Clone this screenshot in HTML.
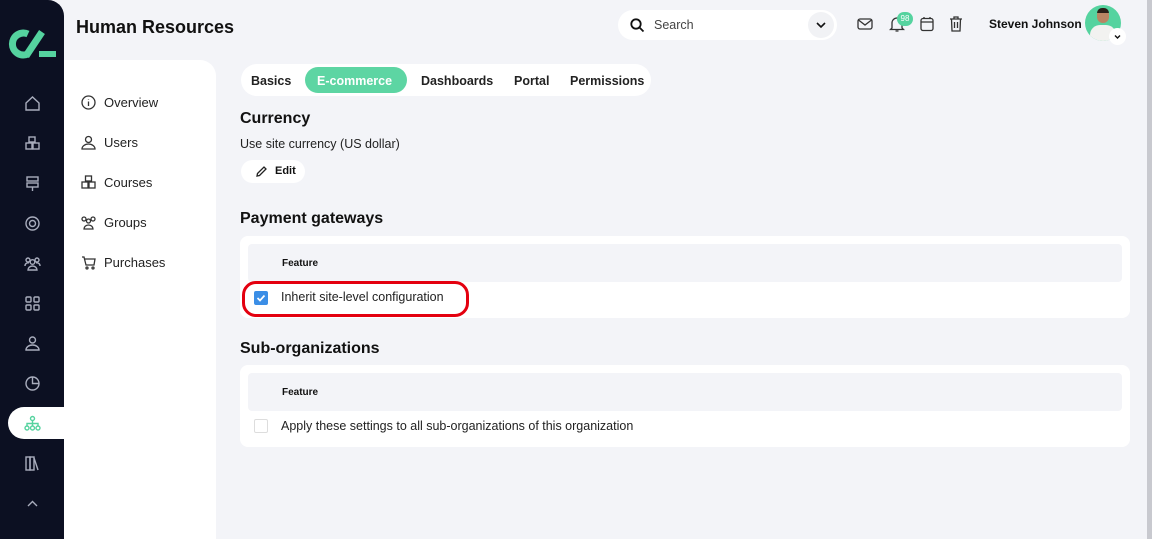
<!DOCTYPE html>
<html><head><meta charset="utf-8"><style>
*{box-sizing:border-box;margin:0;padding:0}
body{width:1152px;height:539px;overflow:hidden;background:#f3f4f8;font-family:"Liberation Sans",sans-serif;color:#111;position:relative}
.side{position:absolute;left:0;top:0;width:64px;height:539px;background:#0c1022;border-top-right-radius:16px}
.ic{position:absolute;left:24px;width:17px;height:17px}
.ic svg{width:17px;height:17px;fill:none;stroke:#a9adbd;stroke-width:1.4}
.act{position:absolute;left:8px;top:407px;width:60px;height:32px;background:#fff;border-radius:16px 0 0 16px}
.sub{position:absolute;left:64px;top:60px;width:152px;height:479px;background:#fff;border-top-right-radius:16px}
.si{position:absolute;left:17px;font-size:13px;color:#222;display:flex;align-items:center;gap:8px}
.si svg{width:15px;height:15px;fill:none;stroke:#333;stroke-width:1.3}
h1{position:absolute;left:76px;top:17px;font-size:18px;font-weight:bold;color:#111}
.search{position:absolute;left:618px;top:10px;width:219px;height:30px;background:#fff;border-radius:15px}
.tabs{position:absolute;left:241px;top:64px;width:410px;height:32px;background:#fff;border-radius:16px}
.tab{position:absolute;top:10px;font-size:12.5px;font-weight:bold;color:#222}
.h2{position:absolute;left:240px;font-size:16px;font-weight:bold}
.card{position:absolute;left:240px;width:890px;height:82px;background:#fff;border-radius:8px}
.hd{position:absolute;left:8px;top:8px;width:874px;height:38px;background:#f3f4f8;border-radius:4px;font-size:10px;font-weight:bold;padding:14px 0 0 34px}
.row{position:absolute;left:41px;font-size:12.5px;color:#222}
.cb{position:absolute;left:14px;width:14px;height:14px;border-radius:2px}
</style></head><body>
<div class="side">
<svg style="position:absolute;left:8px;top:28px" width="50" height="32" viewBox="0 0 50 32"><path d="M20 6 A11 11 0 1 0 20 26" fill="none" stroke="#55d39f" stroke-width="7"/><path d="M18 28 L34 4" stroke="#55d39f" stroke-width="7"/><rect x="31" y="23" width="17" height="6" fill="#55d39f"/></svg>
<div class="ic" style="top:95px"><svg viewBox="0 0 17 17"><path d="M2 8 L8.5 2 L15 8 V15 H2 Z"/></svg></div>
<div class="ic" style="top:135px"><svg viewBox="0 0 17 17"><rect x="5" y="2" width="6" height="5"/><rect x="2" y="8" width="6" height="6"/><rect x="9" y="8" width="6" height="6"/></svg></div>
<div class="ic" style="top:175px"><svg viewBox="0 0 17 17"><rect x="3" y="2" width="11" height="4"/><rect x="3" y="8" width="11" height="4"/><path d="M8.5 12V16"/></svg></div>
<div class="ic" style="top:215px"><svg viewBox="0 0 17 17"><circle cx="8.5" cy="8.5" r="6.5"/><circle cx="8.5" cy="8.5" r="3"/></svg></div>
<div class="ic" style="top:255px"><svg viewBox="0 0 17 17"><circle cx="4" cy="5" r="2"/><circle cx="13" cy="5" r="2"/><circle cx="8.5" cy="7" r="2.3"/><path d="M4 15 a4.5 4 0 0 1 9 0Z M1 11 a3 3 0 0 1 4 -3 M16 11 a3 3 0 0 0 -4 -3"/></svg></div>
<div class="ic" style="top:295px"><svg viewBox="0 0 17 17"><rect x="2" y="2" width="5" height="5" rx="1"/><rect x="10" y="2" width="5" height="5" rx="1"/><rect x="2" y="10" width="5" height="5" rx="1"/><rect x="10" y="10" width="5" height="5" rx="1"/></svg></div>
<div class="ic" style="top:335px"><svg viewBox="0 0 17 17"><circle cx="8.5" cy="5" r="3"/><path d="M2 15 a6.5 5 0 0 1 13 0Z"/></svg></div>
<div class="ic" style="top:375px"><svg viewBox="0 0 17 17"><circle cx="8.5" cy="8.5" r="6.5"/><path d="M8.5 2V8.5H15"/></svg></div>
<div class="act"></div>
<div class="ic" style="top:415px"><svg viewBox="0 0 17 17" style="stroke:#55d39f"><circle cx="8.5" cy="3.5" r="2"/><circle cx="3" cy="13" r="2"/><circle cx="8.5" cy="13" r="2"/><circle cx="14" cy="13" r="2"/><path d="M8.5 5.5V11 M3 11V8.5H14V11"/></svg></div>
<div class="ic" style="top:455px"><svg viewBox="0 0 17 17"><rect x="2" y="2" width="4" height="13"/><rect x="6" y="2" width="4" height="13"/><path d="M10 3 L14 15"/></svg></div>
<div class="ic" style="top:495px"><svg viewBox="0 0 17 17"><path d="M4 11 L8.5 6.5 L13 11"/></svg></div>
</div>
<div class="sub">
<div class="si" style="top:35px"><svg viewBox="0 0 15 15"><circle cx="7.5" cy="7.5" r="6.5"/><path d="M7.5 6.5V11 M7.5 4V4.5"/></svg>Overview</div>
<div class="si" style="top:75px"><svg viewBox="0 0 15 15"><circle cx="7.5" cy="4.5" r="3"/><path d="M1 14 a6.5 5 0 0 1 13 0Z"/></svg>Users</div>
<div class="si" style="top:115px"><svg viewBox="0 0 15 15"><rect x="4.5" y="1" width="6" height="5"/><rect x="1" y="7" width="6" height="6"/><rect x="8" y="7" width="6" height="6"/></svg>Courses</div>
<div class="si" style="top:155px"><svg viewBox="0 0 15 15"><circle cx="3" cy="4" r="2"/><circle cx="12" cy="4" r="2"/><circle cx="7.5" cy="6" r="2"/><path d="M3 14 a4.5 4 0 0 1 9 0Z"/></svg>Groups</div>
<div class="si" style="top:195px"><svg viewBox="0 0 15 15"><path d="M1 2H3L5 10H13L14 4H4"/><circle cx="6" cy="13" r="1"/><circle cx="12" cy="13" r="1"/></svg>Purchases</div>
</div>
<h1>Human Resources</h1>
<div class="search">
<svg style="position:absolute;left:12px;top:8px" width="15" height="15" viewBox="0 0 15 15"><circle cx="6" cy="6" r="4.7" fill="none" stroke="#111" stroke-width="1.8"/><path d="M9.5 9.5L13.5 13.5" stroke="#111" stroke-width="1.8"/></svg>
<span style="position:absolute;left:36px;top:8px;font-size:12.5px;color:#444">Search</span>
<div style="position:absolute;left:190px;top:2px;width:26px;height:26px;border-radius:13px;background:#f1f2f5"><svg width="26" height="26" viewBox="0 0 26 26"><path d="M9 11L13 15L17 11" fill="none" stroke="#111" stroke-width="1.6"/></svg></div>
</div>
<svg style="position:absolute;left:857px;top:17px" width="16" height="14" viewBox="0 0 16 14"><rect x="1" y="2" width="14" height="10" rx="2" fill="none" stroke="#333" stroke-width="1.3"/><path d="M1.5 3L8 8L14.5 3" fill="none" stroke="#333" stroke-width="1.3"/></svg>
<svg style="position:absolute;left:889px;top:16px" width="16" height="17" viewBox="0 0 16 17"><path d="M3 12V7a5 5 0 0 1 10 0v5l1.5 1.5h-13Z M6.5 15h3" fill="none" stroke="#333" stroke-width="1.3"/></svg>
<div style="position:absolute;left:897px;top:12px;width:16px;height:14px;border-radius:7px;background:#55d39f;color:#fff;font-size:8px;text-align:center;line-height:14px">98</div>
<svg style="position:absolute;left:920px;top:16px" width="14" height="16" viewBox="0 0 14 16"><rect x="1" y="2.5" width="12" height="12" rx="2" fill="none" stroke="#333" stroke-width="1.3"/><path d="M1 6H13 M4 1V3 M10 1V3" stroke="#333" stroke-width="1.3"/></svg>
<svg style="position:absolute;left:949px;top:16px" width="14" height="16" viewBox="0 0 14 16"><path d="M1 3H13 M5 3V1H9V3 M2.5 3L3 15H11L11.5 3 M5.5 6V12 M8.5 6V12" fill="none" stroke="#333" stroke-width="1.3"/></svg>
<div style="position:absolute;left:989px;top:17px;font-size:12px;font-weight:bold">Steven Johnson</div>
<div style="position:absolute;left:1085px;top:5px;width:36px;height:36px;border-radius:18px;background:#55d39f;overflow:hidden">
<div style="position:absolute;left:12px;top:4px;width:12px;height:14px;border-radius:6px;background:#b98563"></div>
<div style="position:absolute;left:12px;top:3px;width:12px;height:5px;border-radius:5px 5px 0 0;background:#2a1f18"></div>
<div style="position:absolute;left:5px;top:20px;width:26px;height:20px;border-radius:10px 10px 0 0;background:#f2f2f0"></div>
</div>
<div style="position:absolute;left:1109px;top:28px;width:17px;height:17px;border-radius:9px;background:#fff"><svg width="17" height="17" viewBox="0 0 17 17"><path d="M6 7.5L8.5 10L11 7.5" fill="none" stroke="#111" stroke-width="1.4"/></svg></div>
<div style="position:absolute;left:1147px;top:0;width:5px;height:539px;background:#c8c9cf"></div>

<div class="tabs">
<span class="tab" style="left:10px">Basics</span>
<div style="position:absolute;left:64px;top:3px;width:102px;height:26px;border-radius:13px;background:#5dd5a3"></div>
<span class="tab" style="left:76px;color:#fff">E-commerce</span>
<span class="tab" style="left:180px">Dashboards</span>
<span class="tab" style="left:273px">Portal</span>
<span class="tab" style="left:329px">Permissions</span>
</div>
<div class="h2" style="top:110px">Currency</div>
<div style="position:absolute;left:240px;top:137px;font-size:12.5px;color:#222">Use site currency (US dollar)</div>
<div style="position:absolute;left:241px;top:160px;width:64px;height:23px;border-radius:12px;background:#fff;font-size:11px;font-weight:bold;padding:5px 0 0 34px">Edit
<svg style="position:absolute;left:15px;top:6px" width="11" height="11" viewBox="0 0 11 11"><path d="M1 10L1.5 7.5L8 1L10 3L3.5 9.5Z" fill="none" stroke="#222" stroke-width="1.3"/></svg></div>
<div class="h2" style="top:210px">Payment gateways</div>
<div class="card" style="top:236px">
<div class="hd">Feature</div>
<div class="cb" style="top:55px;background:#3b8ee6"><svg width="14" height="14" viewBox="0 0 14 14"><path d="M3.5 7L6 9.5L10.5 4.5" fill="none" stroke="#fff" stroke-width="1.7"/></svg></div>
<div class="row" style="top:54px">Inherit site-level configuration</div>
</div>
<div style="position:absolute;left:242px;top:281px;width:227px;height:36px;border:3px solid #e4000f;border-radius:14px"></div>
<div class="h2" style="top:340px">Sub-organizations</div>
<div class="card" style="top:365px">
<div class="hd">Feature</div>
<div class="cb" style="top:54px;border:1px solid #ddd;background:#fff"></div>
<div class="row" style="top:54px">Apply these settings to all sub-organizations of this organization</div>
</div>
</body></html>
